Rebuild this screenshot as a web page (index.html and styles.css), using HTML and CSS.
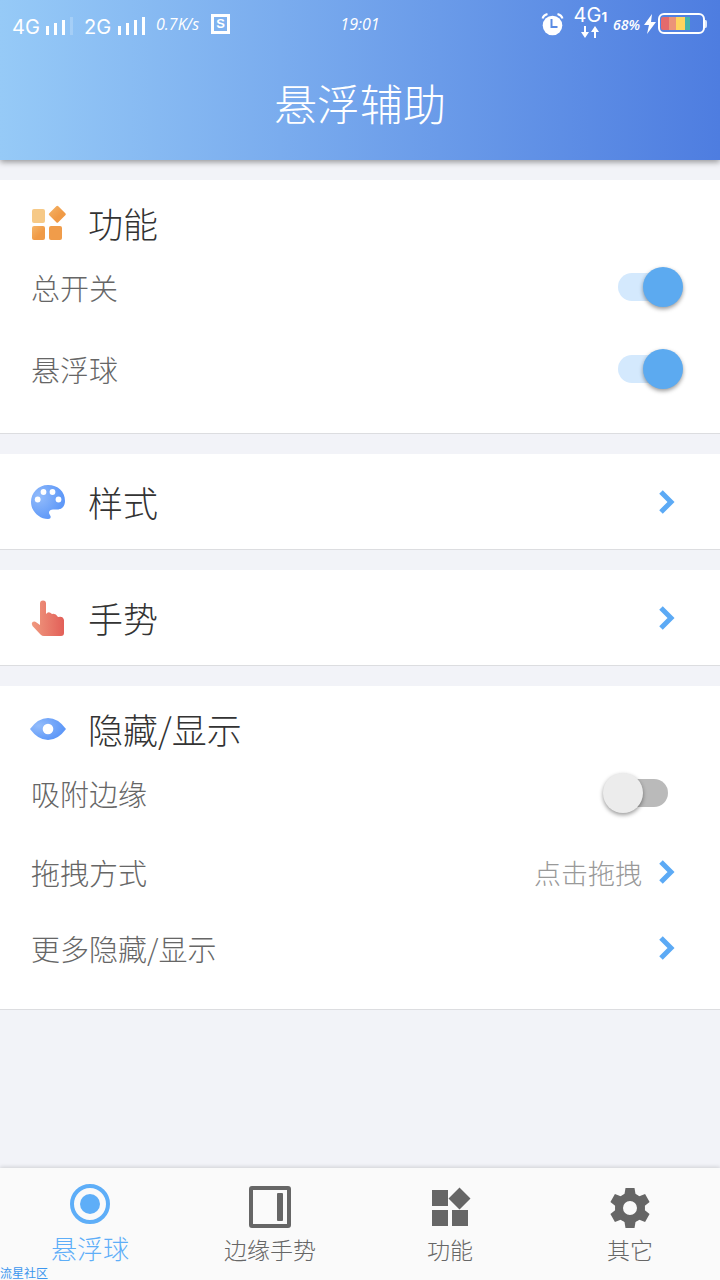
FILE: index.html
```
<!DOCTYPE html>
<html lang="zh-CN">
<head>
    <meta charset="UTF-8">
    <meta name="viewport" content="width=device-width, initial-scale=1.0">
    <title>悬浮辅助</title>
    <link rel="stylesheet" href="styles.css">
</head>
<body>
    <header class="header">
        <div class="status-bar">
            <div class="status-left">
                <span class="network">4G</span>
                <svg class="signal" width="28" height="18" viewBox="0 0 28 18" fill="#fff">
                    <path d="M0 9h3v9H0zM8 6h3v12H8zM16 3h3v15h-3z"/>
                    <path d="M24 0h3v18h-3z" opacity=".2"/>
                </svg>
                <span class="network">2G</span>
                <svg class="signal" width="28" height="18" viewBox="0 0 28 18" fill="#fff">
                    <path d="M0 9h3v9H0zM8 6h3v12H8zM16 3h3v15h-3zM24 0h3v18h-3z"/>
                </svg>
                <span class="speed">0.7K/s</span>
                <span class="sim-box">S</span>
            </div>
            <time class="clock">19:01</time>
            <div class="status-right">
                <svg width="23" height="24" viewBox="0 0 23 24">
                    <circle cx="11.500" cy="13.500" r="9.800" fill="#fff"/>
                    <path d="M1.500 6.500Q2.500 3 6.500 2M21.500 6.500Q20.500 3 16.500 2" fill="none" stroke="#fff" stroke-width="2"/>
                    <path d="M10.500 7v8h6" fill="none" stroke="#5a8be4" stroke-width="2"/>
                </svg>
                <div class="data">
                    <span class="data-type">4G<small>1</small></span>
                    <svg width="20" height="12" viewBox="0 0 20 12" fill="#fff">
                        <path d="M4 0h2v6h3l-4 6-4-6h3zM14 12h2V6h3l-4-6-4 6h3z"/>
                    </svg>
                </div>
                <span class="percent">68%</span>
                <svg class="bolt" width="12" height="20" viewBox="0 0 12 20" fill="#fff">
                    <path d="M8 0 0 11h5L3 20l9-12H7z"/>
                </svg>
                <svg width="50" height="22" viewBox="0 0 50 22">
                    <path d="M46 7h1.500q1.500 0 1.500 2v4q0 2-1.500 2H46z" fill="#dce7fb"/>
                    <rect x="1" y="1" width="45" height="19" rx="5" fill="none" stroke="#fff" stroke-width="2"/>
                    <path d="M5 4h6v13H5q-2 0-2-2V6q0-2 2-2z" fill="#e46a6c"/>
                    <path d="M11 4h7v13h-7z" fill="#ec9478"/>
                    <path d="M18 4h9v13h-9z" fill="#ffd45e"/>
                    <path d="M27 4h5v13h-5z" fill="#45b3ac"/>
                </svg>
            </div>
        </div>
        <h1>悬浮辅助</h1>
    </header>

    <main>
        <section class="card">
            <div class="card-head">
                <svg width="36" height="36" viewBox="0 0 36 36">
                    <defs>
                        <linearGradient id="orange" x1="0" y1="0" x2="1" y2="1">
                            <stop offset="0" stop-color="#f5b569"/>
                            <stop offset=".6" stop-color="#f09a46"/>
                        </linearGradient>
                    </defs>
                    <rect x="2" y="4" width="13" height="14" rx="2" fill="#f6c987"/>
                    <rect x="2" y="21" width="13" height="14" rx="2" fill="url(#orange)"/>
                    <rect x="19" y="21" width="13" height="14" rx="2" fill="#f09c4a"/>
                    <path d="M26.300 1.200q1-1 2 0l7 7q1 1 0 2l-7 7q-1 1-2 0l-7-7q-1-1 0-2z" fill="url(#orange)"/>
                </svg>
                <h2>功能</h2>
            </div>
            <div class="row">
                <label for="master">总开关</label>
                <input class="switch" type="checkbox" id="master" checked>
            </div>
            <div class="row">
                <label for="ball">悬浮球</label>
                <input class="switch" type="checkbox" id="ball" checked>
            </div>
        </section>

        <section class="card">
            <a class="card-link" href="#style">
                <svg width="36" height="36" viewBox="0 0 36 36">
                    <defs>
                        <radialGradient id="blue" cx=".25" cy=".35" r=".7">
                            <stop offset="0" stop-color="#93bcfb"/>
                            <stop offset="1" stop-color="#5e98f8"/>
                        </radialGradient>
                    </defs>
                    <path d="M18 1C8 1 1 9 1 18s8 17 17 17c2.500 0 3-1.500 2.500-3-.5-1.200-1.500-2-1.500-3.500 0-2 2-3 4-3h4c5 0 8-3.500 8-8.500C35 7.500 28 1 18 1z" fill="url(#blue)"/>
                    <g fill="#fff">
                        <circle cx="7.700" cy="15.500" r="2.900"/>
                        <circle cx="13.500" cy="8" r="2.900"/>
                        <circle cx="22.500" cy="8" r="2.900"/>
                        <circle cx="28.500" cy="15.500" r="2.900"/>
                    </g>
                </svg>
                <h2>样式</h2>
                <svg class="arrow" width="16" height="24" viewBox="0 0 16 24"><path d="M2 2l10 10L2 22"/></svg>
            </a>
        </section>

        <section class="card">
            <a class="card-link" href="#gesture">
                <svg width="36" height="36" viewBox="0 0 36 36">
                    <defs>
                        <linearGradient id="red">
                            <stop offset="0" stop-color="#f09a80"/>
                            <stop offset="1" stop-color="#e25f58"/>
                        </linearGradient>
                    </defs>
                    <path d="M10 3.500a3 3 0 0 1 6 0V14q2.500-3.500 6 0 3.500-1 6 3 5-1.500 6 3v13q0 3-3 3H14q-2 0-3.500-1.500L2.500 26q-1.500-2.500 0-4 2-1 4 .5L10 25z" fill="url(#red)"/>
                </svg>
                <h2>手势</h2>
                <svg class="arrow" width="16" height="24" viewBox="0 0 16 24"><path d="M2 2l10 10L2 22"/></svg>
            </a>
        </section>

        <section class="card">
            <div class="card-head">
                <svg width="36" height="36" viewBox="0 0 36 36">
                    <path d="M0 18Q8 7 18 7t18 11Q28 29 18 29T0 18z" fill="url(#blue)"/>
                    <circle cx="18" cy="18" r="5.300" fill="#fff"/>
                </svg>
                <h2>隐藏/显示</h2>
            </div>
            <div class="row">
                <label for="edge">吸附边缘</label>
                <input class="switch" type="checkbox" id="edge">
            </div>
            <a class="row row-link" href="#drag">
                <span>拖拽方式</span>
                <span class="value">点击拖拽</span>
                <svg class="arrow" width="16" height="24" viewBox="0 0 16 24"><path d="M2 2l10 10L2 22"/></svg>
            </a>
            <a class="row row-link" href="#more">
                <span>更多隐藏/显示</span>
                <svg class="arrow" width="16" height="24" viewBox="0 0 16 24"><path d="M2 2l10 10L2 22"/></svg>
            </a>
        </section>
    </main>

    <nav class="tabs">
        <a class="tab active" href="#ball-tab">
            <svg width="40" height="40" viewBox="0 0 40 40">
                <circle cx="20" cy="20" r="18" fill="none" stroke="currentColor" stroke-width="4"/>
                <circle cx="20" cy="20" r="10" fill="currentColor"/>
            </svg>
            <span>悬浮球</span>
        </a>
        <a class="tab" href="#edge-tab">
            <svg width="42" height="42" viewBox="0 0 42 42">
                <rect x="2" y="2" width="38" height="38" rx="1" fill="none" stroke="currentColor" stroke-width="4"/>
                <rect x="28" y="7" width="6" height="28" rx="1" fill="currentColor"/>
            </svg>
            <span>边缘手势</span>
        </a>
        <a class="tab" href="#function-tab">
            <svg width="42" height="42" viewBox="0 0 42 42" fill="currentColor">
                <path d="M3 4h16v16H3zM3 24h16v16H3zM23 24h16v16H23zM30.500 1.500l11 11-11 11-11-11z"/>
            </svg>
            <span>功能</span>
        </a>
        <a class="tab" href="#other-tab">
            <svg width="42" height="42" viewBox="-1 -2 42 42" fill="currentColor">
                <defs>
                    <path id="tooth" d="M15.500 0h9l1 6 3 4h-17l3-4z"/>
                </defs>
                <circle cx="20" cy="20" r="11" fill="none" stroke="currentColor" stroke-width="8"/>
                <use href="#tooth"/>
                <use href="#tooth" transform="rotate(60 20 20)"/>
                <use href="#tooth" transform="rotate(120 20 20)"/>
                <use href="#tooth" transform="rotate(180 20 20)"/>
                <use href="#tooth" transform="rotate(240 20 20)"/>
                <use href="#tooth" transform="rotate(300 20 20)"/>
            </svg>
            <span>其它</span>
        </a>
        <span class="watermark">流星社区</span>
    </nav>
</body>
</html>
```

FILE: styles.css
```
* {
    box-sizing: border-box;
}
body {
    display: flex;
    flex-direction: column;
    min-height: 100vh;
    margin: 0;
    background: #f2f3f8;
    color: #666;
    font-family: "Noto Sans CJK SC", sans-serif;
    font-weight: 300;
}
a {
    color: inherit;
    text-decoration: none;
}
h1, h2 {
    margin: 0;
    font-weight: 300;
}
svg {
    display: block;
    flex-shrink: 0;
}

/* header */
.header {
    height: 160px;
    background: linear-gradient(90deg, #96caf7, #4e7de0);
    box-shadow: 0 2px 6px rgba(0, 0, 0, 0.4);
    color: #fff;
}
.header h1 {
    font-size: 43px;
    line-height: 108px;
    text-align: center;
}
.status-bar {
    display: grid;
    grid-template-columns: 1fr auto 1fr;
    align-items: center;
    height: 48px;
    padding: 0 12px;
}
.status-left, .status-right {
    display: flex;
    align-items: center;
}
.status-right {
    justify-content: flex-end;
}
.network {
    width: 28px;
    padding-top: 6px;
    font-family: Inter, sans-serif;
    font-size: 20px;
    font-weight: 400;
    line-height: 24px;
}
.signal {
    margin: 4px 10px 0 6px;
}
.speed, .clock, .percent {
    font-family: "Open Sans", sans-serif;
    font-style: italic;
    font-weight: 400;
    font-size: 16px;
}
.speed {
    width: 55px;
}
.sim-box {
    width: 19px;
    height: 20px;
    border: 3px solid #fff;
    font: bold 13px/14px "Liberation Sans", sans-serif;
    text-align: center;
}
.data {
    display: flex;
    flex-direction: column;
    align-items: center;
    margin: 0 6px 4px 10px;
}
.data-type {
    font-family: Inter, sans-serif;
    font-size: 20px;
    font-weight: 400;
    line-height: 18px;
}
.data-type small {
    font-size: 13px;
    font-weight: bold;
}
.percent {
    font-size: 14px;
    font-weight: 600;
}
.bolt {
    margin: 0 2px 0 4px;
}

/* cards */
.card {
    margin-top: 20px;
    background: #fff;
    border-bottom: 1px solid #dcdde0;
}
.card-head {
    display: flex;
    align-items: center;
    height: 66px;
    padding: 20px 30px 0;
}
.card-link {
    display: flex;
    align-items: center;
    height: 95px;
    padding: 0 45px 0 30px;
}
.card h2 {
    margin-left: 22px;
    color: #333;
    font-size: 35px;
    line-height: 46px;
}
.row {
    display: flex;
    align-items: center;
    height: 82px;
    padding: 0 37px 0 31px;
    font-size: 29px;
}
.row:last-child {
    margin-bottom: 23px;
}
.row-link {
    height: 76px;
    padding-right: 45px;
}
.value {
    margin-left: auto;
    color: #999;
    font-size: 27px;
}
.arrow {
    margin-left: auto;
    fill: none;
    stroke: #5caaf5;
    stroke-width: 5;
}
.value + .arrow {
    margin-left: 17px;
}

/* switch */
.switch {
    appearance: none;
    display: grid;
    align-items: center;
    width: 80px;
    height: 40px;
    margin: 0 0 0 auto;
    cursor: pointer;
}
.switch::before, .switch::after {
    content: "";
    grid-area: 1 / 1;
}
.switch::before {
    justify-self: center;
    width: 50px;
    height: 28px;
    border-radius: 14px;
    background: #bababa;
}
.switch::after {
    width: 40px;
    height: 40px;
    border-radius: 50%;
    background: #ececec;
    box-shadow: 0 2px 4px rgba(0, 0, 0, 0.4);
}
.switch:checked::before {
    background: #d4e9fd;
}
.switch:checked::after {
    justify-self: end;
    background: #5caaf0;
}

/* bottom tabs */
.tabs {
    position: relative;
    display: grid;
    grid-template-columns: repeat(4, 1fr);
    height: 112px;
    margin-top: auto;
    background: #fafafa;
    box-shadow: 0 -1px 4px rgba(0, 0, 0, 0.15);
}
.tab {
    display: flex;
    flex-direction: column;
    align-items: center;
    padding-top: 18px;
    font-size: 23px;
    line-height: 42px;
}
.tab.active {
    padding-top: 16px;
    color: #5eaef8;
    font-size: 26px;
    line-height: 48px;
}
.watermark {
    position: absolute;
    left: 0;
    bottom: 0;
    color: #3c96ee;
    font-size: 12px;
    font-weight: 400;
    line-height: 14px;
}
```
